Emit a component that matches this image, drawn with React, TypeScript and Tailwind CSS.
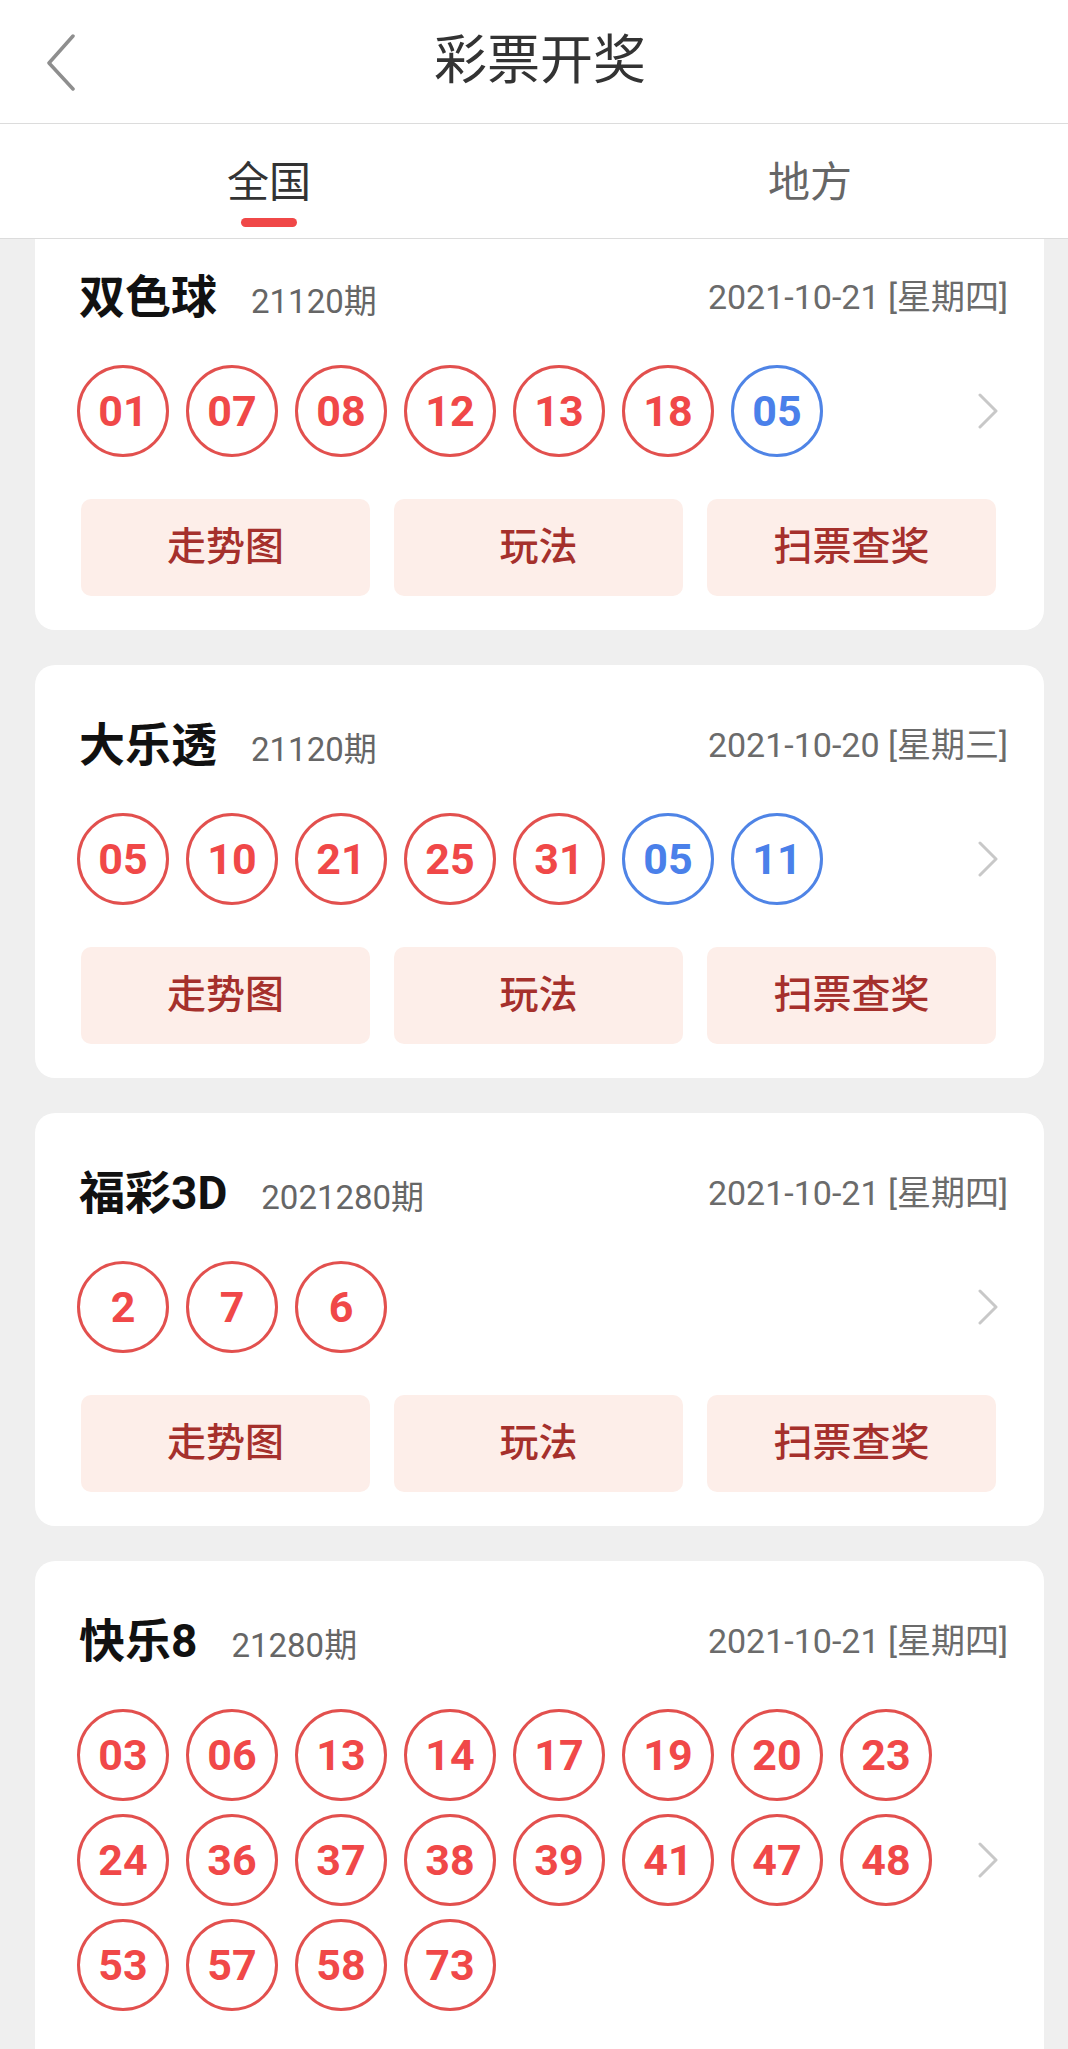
import React from "react";

type Ball = { n: string; blue?: boolean };
type Lottery = {
  name: string;
  period: string;
  date: string;
  balls: Ball[];
  grid?: boolean;
};

const FONT = "font-['Roboto','Noto_Sans_CJK_SC',sans-serif]";

const lotteries: Lottery[] = [
  {
    name: "双色球",
    period: "21120期",
    date: "2021-10-21 [星期四]",
    balls: [
      { n: "01" },
      { n: "07" },
      { n: "08" },
      { n: "12" },
      { n: "13" },
      { n: "18" },
      { n: "05", blue: true },
    ],
  },
  {
    name: "大乐透",
    period: "21120期",
    date: "2021-10-20 [星期三]",
    balls: [
      { n: "05" },
      { n: "10" },
      { n: "21" },
      { n: "25" },
      { n: "31" },
      { n: "05", blue: true },
      { n: "11", blue: true },
    ],
  },
  {
    name: "福彩3D",
    period: "2021280期",
    date: "2021-10-21 [星期四]",
    balls: [{ n: "2" }, { n: "7" }, { n: "6" }],
  },
  {
    name: "快乐8",
    period: "21280期",
    date: "2021-10-21 [星期四]",
    grid: true,
    balls: [
      "03", "06", "13", "14", "17", "19", "20", "23",
      "24", "36", "37", "38", "39", "41", "47", "48",
      "53", "57", "58", "73",
    ].map((n) => ({ n })),
  },
];

function BallView({ b }: { b: Ball }) {
  return (
    <div
      className={
        b.blue
          ? "w-[92px] h-[92px] shrink-0 rounded-full border-[3px] border-[#4f84e6] flex items-center justify-center text-[43px] font-bold text-[#4a80ea] leading-none"
          : "w-[92px] h-[92px] shrink-0 rounded-full border-[3px] border-[#e2504e] flex items-center justify-center text-[43px] font-bold text-[#f04848] leading-none"
      }
    >
      {b.n}
    </div>
  );
}

function Chevron() {
  return (
    <svg width="20" height="36" viewBox="0 0 20 36" className="shrink-0 mr-[2px]">
      <polyline
        points="2,2 18,18 2,34"
        fill="none"
        stroke="#c8c8c8"
        strokeWidth="3"
        strokeLinecap="round"
        strokeLinejoin="round"
      />
    </svg>
  );
}

function Card({ l, first }: { l: Lottery; first?: boolean }) {
  const cls = first
    ? "bg-white rounded-b-[20px] pl-[42px] pr-[44px] pt-[33px] pb-[34px]"
    : l.grid
    ? "bg-white rounded-[20px] pl-[42px] pr-[44px] pt-[55px] pb-[160px]"
    : "bg-white rounded-[20px] pl-[42px] pr-[44px] pt-[55px] pb-[34px]";
  return (
    <div className={cls}>
      <div className="h-[50px] flex items-center justify-between ml-[2px] mr-[-8px]">
        <div className="flex items-baseline">
          <span className="text-[46px] font-bold text-[#111] leading-none">{l.name}</span>
          <span className="ml-[34px] text-[33px] text-[#666] leading-none">{l.period}</span>
        </div>
        <span className="text-[34px] text-[#6b6b6b] leading-none">{l.date}</span>
      </div>
      <div className="mt-[43px] flex items-center justify-between">
        {l.grid ? (
          <div className="grid grid-cols-[repeat(8,92px)] gap-x-[17px] gap-y-[13px]">
            {l.balls.map((b, i) => (
              <BallView key={i} b={b} />
            ))}
          </div>
        ) : (
          <div className="flex gap-[17px]">
            {l.balls.map((b, i) => (
              <BallView key={i} b={b} />
            ))}
          </div>
        )}
        <Chevron />
      </div>
      {!l.grid && (
        <div className="mt-[42px] px-[4px] grid grid-cols-3 gap-[24px]">
          {["走势图", "玩法", "扫票查奖"].map((t) => (
            <div
              key={t}
              className="h-[97px] rounded-[10px] bg-[#fdeee9] flex items-center justify-center text-[39px] font-medium text-[#a5302c]"
            >
              {t}
            </div>
          ))}
        </div>
      )}
    </div>
  );
}

export default function App() {
  return (
    <div className={`w-[1068px] h-[2049px] overflow-hidden bg-[#efefef] ${FONT}`}>
      <div className="h-[124px] bg-white border-b border-[#dcdcdc] flex items-center">
        <div className="w-[160px] pl-[46px] flex items-center">
          <svg width="30" height="58" viewBox="0 0 30 58">
            <polyline
              points="27,3 3,30 27,56"
              fill="none"
              stroke="#8e8e8e"
              strokeWidth="3.5"
              strokeLinecap="round"
              strokeLinejoin="round"
            />
          </svg>
        </div>
        <div className="flex-1 text-center text-[53px] text-[#333] leading-none">彩票开奖</div>
        <div className="w-[148px]" />
      </div>
      <div className="h-[115px] bg-white border-b border-[#dcdcdc] flex">
        <div className="w-[538px] flex flex-col items-center pt-[34px]">
          <div className="h-[50px] flex items-center text-[42px] text-[#333] leading-none">全国</div>
          <div className="mt-[10px] w-[56px] h-[9px] rounded-full bg-[#f04848]" />
        </div>
        <div className="flex-1 flex flex-col items-center pt-[34px] pl-[14px]">
          <div className="h-[50px] flex items-center text-[42px] text-[#666] leading-none">地方</div>
        </div>
      </div>
      <div className="pl-[35px] pr-[24px] flex flex-col gap-[35px]">
        {lotteries.map((l, i) => (
          <Card key={i} l={l} first={i === 0} />
        ))}
      </div>
    </div>
  );
}
